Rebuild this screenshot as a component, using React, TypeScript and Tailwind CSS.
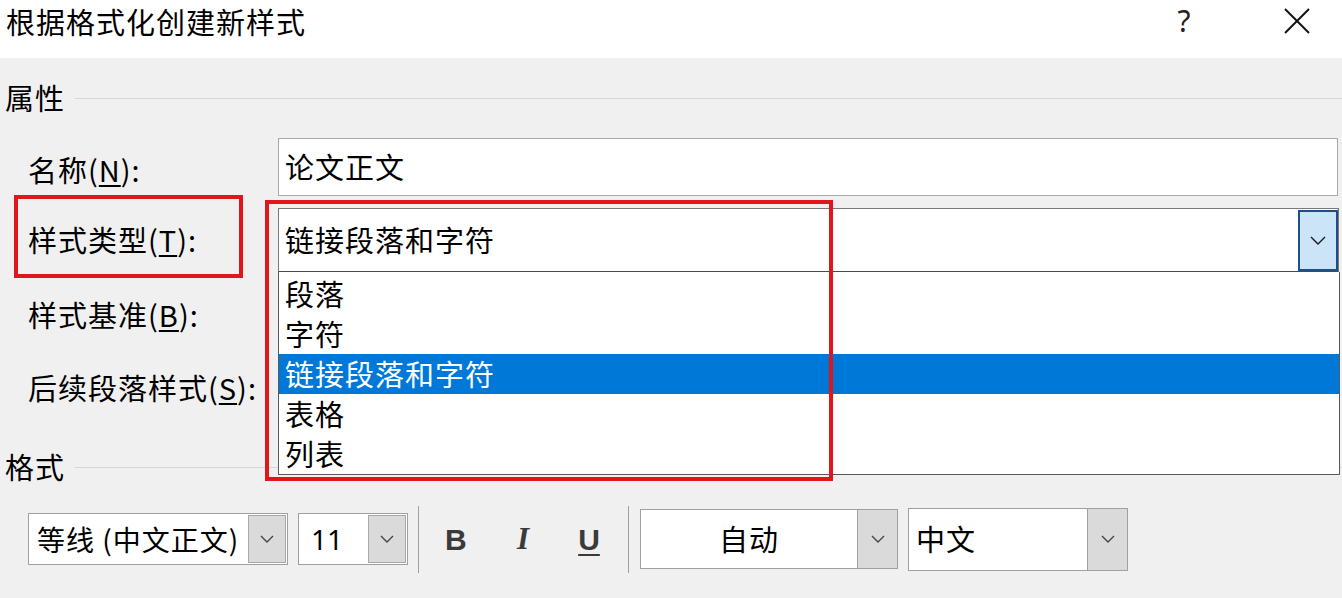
import React from "react";

const Chevron = ({ w = 14, h = 8, color = "#333" }: { w?: number; h?: number; color?: string }) => (
  <svg width={w} height={h} viewBox={`0 0 ${w} ${h}`}>
    <polyline points={`1,1 ${w / 2},${h - 1} ${w - 1},1`} fill="none" stroke={color} strokeWidth="1.4" />
  </svg>
);

const U = ({ c }: { c: string }) => <span className="underline underline-offset-[3px] decoration-[1.5px]">{c}</span>;

export default function App() {
  return (
    <div className="relative w-[1342px] h-[598px] overflow-hidden bg-[#f0f0f0] text-black font-['Noto_Sans_CJK_SC',sans-serif] text-[29px] tracking-[1px]">
      {/* Title bar */}
      <div className="h-[58px] bg-white flex items-start">
        <div className="pl-[6px] leading-[42px]">根据格式化创建新样式</div>
        <div className="ml-auto w-[40px] text-center leading-[42px] text-[30px] font-['Noto_Sans',sans-serif] text-[#222] mr-[80px] tracking-normal">?</div>
        <div className="w-[26px] h-[26px] mt-[8px] mr-[32px]">
          <svg width="26" height="26" viewBox="0 0 26 26">
            <line x1="1" y1="1" x2="25" y2="25" stroke="#111" strokeWidth="2" />
            <line x1="25" y1="1" x2="1" y2="25" stroke="#111" strokeWidth="2" />
          </svg>
        </div>
      </div>

      {/* 属性 header */}
      <div className="mt-[21px] h-[38px] flex items-center">
        <div className="pl-[5px] w-[75px]">属性</div>
        <div className="flex-1 h-[1px] bg-[#d7d7d7]" />
      </div>

      {/* Name row */}
      <div className="mt-[21px] h-[58px] flex items-center">
        <div className="w-[278px] pl-[28px] pt-[6px]">名称(<U c="N" />):</div>
        <div className="w-[1060px] h-[58px] bg-white border border-[#a9a9a9] flex items-center pl-[6px]">论文正文</div>
      </div>

      {/* Style type row */}
      <div className="mt-[12px] h-[64px] flex items-center">
        <div className="w-[278px] pl-[28px]">样式类型(<U c="T" />):</div>
        <div className="relative w-[1061px] h-[64px] bg-white border border-[#7a7a7a] border-b-[#4a4a4a] flex items-center">
          <div className="flex-1 pl-[6px]">链接段落和字符</div>
          <div className="w-[40px] h-[61px] bg-[#cce4f7] border-2 border-[#1c4f86] flex items-center justify-center">
            <Chevron w={16} h={9} color="#1a1a1a" />
          </div>
          {/* Dropdown list */}
          <div className="absolute left-[-1px] top-[63px] w-[1062px] h-[203px] bg-white border border-[#5a5a5a] border-t-0 pt-[2px] flex flex-col">
            <div className="h-[40px] flex items-center pl-[6px]">段落</div>
            <div className="h-[40px] flex items-center pl-[6px]">字符</div>
            <div className="h-[40px] flex items-center pl-[6px] bg-[#0078d7] text-white">链接段落和字符</div>
            <div className="h-[40px] flex items-center pl-[6px]">表格</div>
            <div className="h-[40px] flex items-center pl-[6px]">列表</div>
          </div>
        </div>
      </div>

      {/* 样式基准 row */}
      <div className="mt-[18px] h-[50px] flex items-center">
        <div className="w-[278px] pl-[28px]">样式基准(<U c="B" />):</div>
      </div>

      {/* 后续段落样式 row */}
      <div className="mt-[23px] h-[50px] flex items-center">
        <div className="w-[278px] pl-[28px] whitespace-nowrap">后续段落样式(<U c="S" />):</div>
      </div>

      {/* 格式 header */}
      <div className="mt-[35px] h-[38px] flex items-center">
        <div className="pl-[5px] w-[75px]">格式</div>
        <div className="flex-1 h-[1px] bg-[#d7d7d7]" />
      </div>

      {/* Toolbar */}
      <div className="mt-[22px] h-[62px] flex items-center pl-[28px] tracking-normal">
        <div className="w-[260px] h-[52px] bg-white border border-[#a0a0a0] flex items-center">
          <div className="flex-1 pl-[8px] whitespace-nowrap text-[28px] tracking-[1px]">等线 (中文正文)</div>
          <div className="w-[38px] h-[48px] bg-[#dadada] border border-[#a8a8a8] mr-[1px] flex items-center justify-center">
            <Chevron w={14} h={8} color="#444" />
          </div>
        </div>
        <div className="ml-[10px] w-[110px] h-[52px] bg-white border border-[#a0a0a0] flex items-center">
          <div className="flex-1 pl-[12px] font-['Noto_Sans',sans-serif] text-[28px]">11</div>
          <div className="w-[38px] h-[48px] bg-[#dadada] border border-[#a8a8a8] mr-[1px] flex items-center justify-center">
            <Chevron w={14} h={8} color="#444" />
          </div>
        </div>
        <div className="ml-[10px] w-[1px] h-[67px] bg-[#a0a0a0]" />
        <div className="ml-[26px] w-[20px] text-center font-['Liberation_Sans',sans-serif] font-bold text-[30px] text-[#3a3a3a]">B</div>
        <div className="ml-[48px] w-[20px] text-center font-['Liberation_Serif',serif] font-bold italic text-[31px] text-[#3a3a3a]">I</div>
        <div className="ml-[45px] w-[22px] text-center font-['Liberation_Sans',sans-serif] font-bold text-[30px] text-[#3a3a3a] underline underline-offset-[4px] decoration-[2px]">U</div>
        <div className="ml-[28px] w-[1px] h-[67px] bg-[#a0a0a0]" />
        <div className="ml-[11px] w-[258px] h-[60px] bg-white border border-[#a0a0a0] flex items-center">
          <div className="flex-1 text-center tracking-[1px]">自动</div>
          <div className="w-[40px] h-[58px] bg-[#dadada] border-l border-[#a0a0a0] flex items-center justify-center">
            <Chevron w={14} h={8} color="#444" />
          </div>
        </div>
        <div className="ml-[10px] w-[220px] h-[63px] bg-white border border-[#a0a0a0] flex items-center">
          <div className="flex-1 pl-[7px] tracking-[1px]">中文</div>
          <div className="w-[40px] h-[61px] bg-[#dadada] border-l border-[#a0a0a0] flex items-center justify-center">
            <Chevron w={14} h={8} color="#444" />
          </div>
        </div>
      </div>

      {/* Red annotation boxes */}
      <div className="absolute left-[14px] top-[195px] w-[229px] h-[83px] border-4 border-[#e0161f]" />
      <div className="absolute left-[265px] top-[200px] w-[568px] h-[281px] border-4 border-[#e0161f]" />
    </div>
  );
}
